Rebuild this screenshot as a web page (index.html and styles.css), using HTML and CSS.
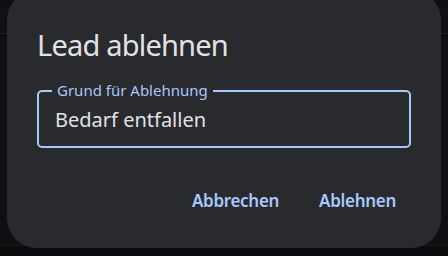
FILE: index.html
```html
<!DOCTYPE html>
<html lang="de">
<head>
<meta charset="utf-8">
<title>Lead ablehnen</title>
<link rel="stylesheet" href="styles.css">
</head>
<body>
<div class="screen">
  <div class="appbar"></div>
  <div class="content"></div>
  <div class="bottombar"></div>
  <div class="dialog" role="dialog" aria-labelledby="dlg-title">
    <h1 class="dialog-title" id="dlg-title">Lead ablehnen</h1>
    <div class="field">
      <span class="field-label">Grund für Ablehnung</span>
      <div class="field-input">Bedarf entfallen</div>
    </div>
    <div class="actions">
      <button class="btn" type="button">Abbrechen</button>
      <button class="btn" type="button">Ablehnen</button>
    </div>
  </div>
</div>
</body>
</html>
```
FILE: styles.css
```css
* { box-sizing: border-box; }
html, body {
  margin: 0;
  padding: 0;
  width: 448px;
  height: 256px;
  overflow: hidden;
  background: #0f1012;
  font-family: "Noto Sans", "Open Sans", "DejaVu Sans", sans-serif;
}
.screen {
  position: relative;
  width: 448px;
  height: 256px;
  display: flex;
  flex-direction: column;
}
.appbar {
  height: 34px;
  background: #0f1012;
  border-bottom: 1px solid #202124;
}
.content {
  flex: 1;
  background: #0e0f11;
}
.bottombar {
  height: 11px;
  background: #0b0c0d;
  border-top: 1px solid #161719;
}
.dialog {
  position: absolute;
  left: 7px;
  top: -10px;
  width: 434px;
  height: 258px;
  background: #282a2e;
  border-radius: 30px;
  padding: 0 30px;
  display: flex;
  flex-direction: column;
}
.dialog-title {
  margin: 35px 0 0;
  font-size: 29px;
  letter-spacing: -0.8px;
  line-height: 40px;
  font-weight: 400;
  color: #e2e2e6;
}
.field {
  position: relative;
  margin-top: 25px;
  height: 58px;
  border: 2px solid #a8c7fa;
  border-radius: 5px;
  padding: 16px 16px 0;
}
.field-label {
  position: absolute;
  left: 13px;
  top: -9px;
  padding: 0 5px;
  background: #282a2e;
  font-size: 15px;
  line-height: 15px;
  color: #a8c7fa;
}
.field-input {
  font-size: 20px;
  line-height: 24px;
  color: #e2e2e6;
}
.actions {
  margin-top: 27px;
  display: flex;
  justify-content: flex-end;
  gap: 10px;
}
.btn {
  height: 50px;
  padding: 0 15px;
  border: 0;
  background: transparent;
  color: #a8c7fa;
  font-family: inherit;
  font-size: 17px;
  letter-spacing: -0.3px;
  font-weight: 600;
  border-radius: 25px;
}
```
